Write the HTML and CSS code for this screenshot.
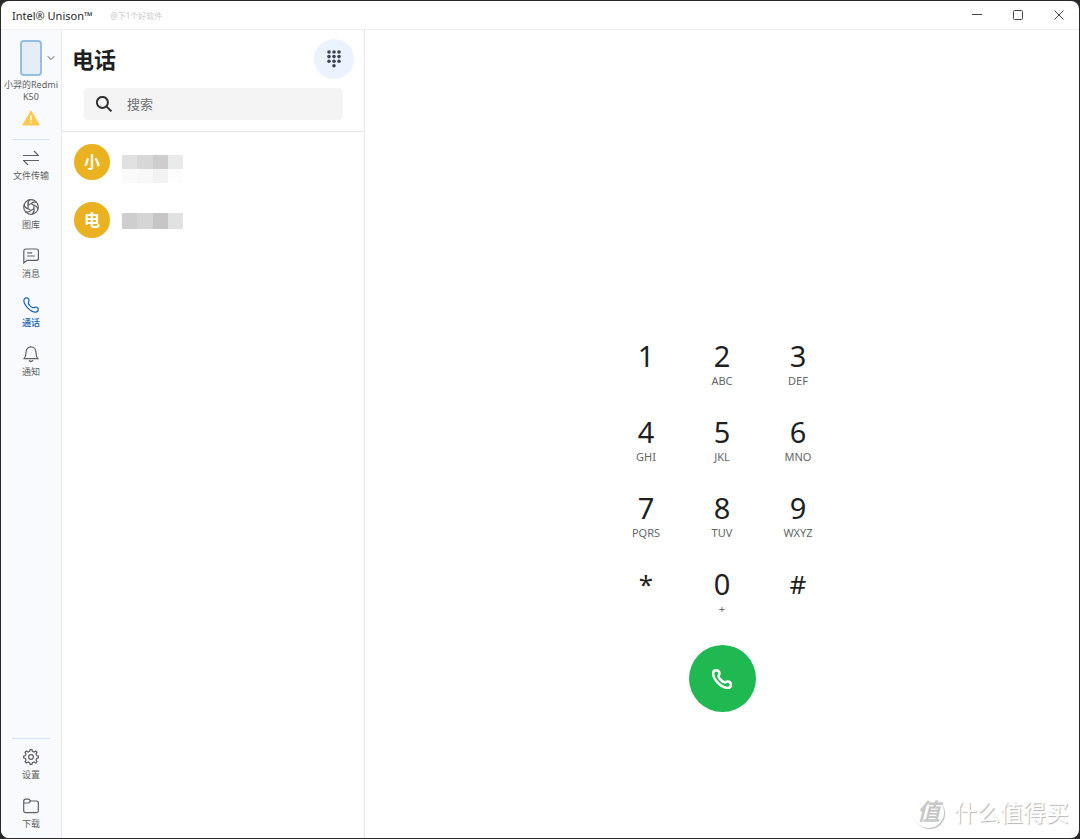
FILE: index.html
```html
<!DOCTYPE html>
<html lang="zh-CN">
<head>
    <meta charset="UTF-8">
    <meta name="viewport" content="width=device-width, initial-scale=1.0">
    <title>Intel® Unison™</title>
    <link rel="stylesheet" href="styles.css">
</head>
<body>
    <!-- handset shape, shared by the nav and the call button -->
    <svg class="defs" aria-hidden="true">
        <symbol id="phone" viewBox="0 0 16 16">
            <path d="M.9 3.6C.9 2 2 .9 3.4.9c1.5 0 2.6 1.2 2.6 2.6 0 1-.9 1.5-.7 2.5.4 1.7 2.9 4.2 4.7 4.7 1 .2 1.5-.7 2.5-.7 1.5 0 2.7 1.2 2.7 2.6 0 1.5-1.2 2.6-2.8 2.6C7.6 15.2.9 8.4.9 3.6z"/>
        </symbol>
    </svg>

    <div class="window">
        <header class="titlebar">
            <span class="app-name">Intel® Unison™</span>
            <span class="credit">@下1个好软件</span>
            <div class="window-controls">
                <button type="button" aria-label="最小化">
                    <svg viewBox="0 0 10 10"><path d="M0 4.5h10"/></svg>
                </button>
                <button type="button" aria-label="最大化">
                    <svg viewBox="0 0 10 10"><rect x=".5" y=".5" width="9" height="9" rx="1"/></svg>
                </button>
                <button type="button" aria-label="关闭">
                    <svg viewBox="0 0 10 10"><path d="M.5.5l9 9M9.5.5l-9 9"/></svg>
                </button>
            </div>
        </header>

        <div class="layout">
            <aside class="sidebar">
                <button type="button" class="device">
                    <span class="device-picture">
                        <span class="device-phone"></span>
                        <svg class="chevron" viewBox="0 0 8 6"><path d="M.8 1.2L4 4.6l3.2-3.4"/></svg>
                    </span>
                    <span class="device-name">小羿的Redmi<br>K50</span>
                </button>
                <svg class="warning" viewBox="0 0 18 16">
                    <path class="warning-shape" d="M9 1L17.2 15H.8z"/>
                    <path class="warning-mark" d="M9 5.4v4.8M9 11.6v1.6"/>
                </svg>

                <nav class="nav">
                    <a href="#files">
                        <svg viewBox="0 0 16 16"><path d="M0 5.5h15.5L11 1M16 10.5H.5L5 15"/></svg>
                        文件传输
                    </a>
                    <a href="#gallery">
                        <svg viewBox="0 0 16 16">
                            <circle cx="8" cy="8" r="7.3"/>
                            <path d="M8 4.6C10 2.6 12 2.6 13.6 3.4M10.9 6.3C13.6 7 14.6 8.6 14.8 10.4M10.9 9.7C11.6 12.4 10.6 14 9.2 15.2M8 11.4C6 13.4 4 13.4 2.4 12.6M5.1 9.7C2.4 9 1.4 7.4 1.2 5.6M5.1 6.3C4.4 3.6 5.4 2 6.8.8"/>
                            <path d="M8 4.6l2.9 1.7v3.4L8 11.4 5.1 9.7V6.3z"/>
                        </svg>
                        图库
                    </a>
                    <a href="#messages">
                        <svg viewBox="0 0 16 16">
                            <path d="M2.6 1h10.8a2 2 0 0 1 2 2v7.4a2 2 0 0 1-2 2H4L.8 15V3a2 2 0 0 1 1.8-2z"/>
                            <path d="M4.2 4.8h5M4.2 8h7.6"/>
                        </svg>
                        消息
                    </a>
                    <a href="#calls" class="active" aria-current="page">
                        <svg><use href="#phone"/></svg>
                        通话
                    </a>
                    <a href="#notifications">
                        <svg viewBox="0 0 16 16">
                            <path d="M1.2 12.6C2.6 11 3 9.6 3 6.4 3 3.2 5.2.8 8 .8s5 2.4 5 5.6c0 3.2.4 4.6 1.8 6.2z"/>
                            <path d="M5.8 14.6c1.2.9 3.2.9 4.4 0"/>
                        </svg>
                        通知
                    </a>
                </nav>

                <nav class="nav nav-bottom">
                    <a href="#settings">
                        <svg viewBox="0 0 16 16">
                            <circle cx="8" cy="8" r="2.4"/>
                            <path d="M6.6 2.4L7.1.6h1.8l.5 1.8 1.6.7 1.7-1 1.3 1.3-1 1.7.7 1.5 1.7.5v1.8l-1.7.5-.7 1.6 1 1.7-1.3 1.3-1.7-1-1.6.7-.5 1.7H7.1l-.5-1.7-1.6-.7-1.7 1L2 12.7l1-1.7-.7-1.6-1.7-.5V7.1l1.7-.5L3 5.1 2 3.4l1.3-1.3 1.7 1z"/>
                        </svg>
                        设置
                    </a>
                    <a href="#downloads">
                        <svg viewBox="0 0 16 16">
                            <path d="M.7 4.6V3a1.8 1.8 0 0 1 1.8-1.8h3.3L7.6 3h5.9a1.8 1.8 0 0 1 1.8 1.8v8a1.8 1.8 0 0 1-1.8 1.8h-11a1.8 1.8 0 0 1-1.8-1.8zM.7 5h5.1l1.8-2"/>
                        </svg>
                        下载
                    </a>
                </nav>
            </aside>

            <section class="contacts">
                <div class="contacts-head">
                    <div class="title-row">
                        <h1>电话</h1>
                        <button type="button" class="keypad-toggle" aria-label="拨号键盘">
                            <svg viewBox="0 0 14 18">
                                <circle cx="2" cy="2" r="1.8"/><circle cx="7" cy="2" r="1.8"/><circle cx="12" cy="2" r="1.8"/>
                                <circle cx="2" cy="6.6" r="1.8"/><circle cx="7" cy="6.6" r="1.8"/><circle cx="12" cy="6.6" r="1.8"/>
                                <circle cx="2" cy="11.2" r="1.8"/><circle cx="7" cy="11.2" r="1.8"/><circle cx="12" cy="11.2" r="1.8"/>
                                <circle cx="7" cy="15.8" r="1.8"/>
                            </svg>
                        </button>
                    </div>
                    <label class="search">
                        <svg viewBox="0 0 16 16"><circle cx="6.4" cy="6.4" r="5.5"/><path d="M10.4 10.4l5 5"/></svg>
                        <input type="search" placeholder="搜索" aria-label="搜索">
                    </label>
                </div>
                <ul class="contact-list">
                    <li>
                        <span class="avatar">小</span>
                        <span class="masked">
                            <span class="mask mask-name"></span>
                            <span class="mask mask-detail"></span>
                        </span>
                    </li>
                    <li>
                        <span class="avatar">电</span>
                        <span class="masked">
                            <span class="mask mask-number"></span>
                        </span>
                    </li>
                </ul>
            </section>

            <main class="dialer">
                <div class="keypad">
                    <button type="button">1</button>
                    <button type="button">2<small>ABC</small></button>
                    <button type="button">3<small>DEF</small></button>
                    <button type="button">4<small>GHI</small></button>
                    <button type="button">5<small>JKL</small></button>
                    <button type="button">6<small>MNO</small></button>
                    <button type="button">7<small>PQRS</small></button>
                    <button type="button">8<small>TUV</small></button>
                    <button type="button">9<small>WXYZ</small></button>
                    <button type="button" class="sign">*</button>
                    <button type="button">0<small>+</small></button>
                    <button type="button" class="sign">#</button>
                </div>
                <button type="button" class="call" aria-label="拨打">
                    <svg><use href="#phone"/></svg>
                </button>
            </main>
        </div>

        <div class="watermark">
            <span class="watermark-logo">值</span>
            <span>什么值得买</span>
        </div>
    </div>
</body>
</html>
```
FILE: styles.css
```css
* {
    box-sizing: border-box;
}

body {
    margin: 0;
    height: 100vh;
    padding: 1px;
    background-color: #29292b;
    font-family: "Noto Sans", "Noto Sans CJK SC", sans-serif;
    color: #1f1f1f;
}

button {
    padding: 0;
    border: none;
    background: none;
    font-family: inherit;
    color: inherit;
    cursor: pointer;
}

svg {
    display: block;
    fill: none;
    stroke: currentColor;
}

.defs {
    position: absolute;
    width: 0;
    height: 0;
}

.window {
    position: relative;
    display: flex;
    flex-direction: column;
    height: 100%;
    border-radius: 8px;
    background-color: #fff;
    overflow: hidden;
}

/* title bar */
.titlebar {
    display: flex;
    align-items: center;
    height: 29px;
    padding-left: 11px;
    border-bottom: 1px solid #efefef;
}

.app-name {
    font-size: 11px;
}

.credit {
    margin-left: 18px;
    font-size: 8px;
    color: #c9c9c9;
}

.window-controls {
    display: flex;
    height: 100%;
    margin-left: auto;
}

.window-controls button {
    display: flex;
    justify-content: center;
    align-items: center;
    width: 41px;
    color: #444;
}

.window-controls svg {
    width: 10px;
    height: 10px;
}

.layout {
    display: flex;
    flex: 1;
    min-height: 0;
}

/* sidebar */
.sidebar {
    display: flex;
    flex-direction: column;
    align-items: center;
    width: 61px;
    padding-top: 10px;
    border-right: 1px solid #e8eaed;
    background-color: #f8fafd;
    color: #606060;
}

.device {
    display: flex;
    flex-direction: column;
    align-items: center;
    gap: 3px;
}

.device-picture {
    display: grid;
    grid-template-columns: 1fr 22px 1fr;
    align-items: center;
    width: 60px;
}

.device-phone {
    grid-column: 2;
    height: 36px;
    border: 2px solid #93bfe2;
    border-radius: 4px;
    background-color: #e5eef7;
}

.chevron {
    width: 8px;
    height: 6px;
    margin-left: 5px;
}

.device-name {
    font-size: 9px;
    line-height: 12px;
    white-space: nowrap;
}

.warning {
    width: 18px;
    height: 16px;
    margin-top: 7px;
}

.warning-shape {
    fill: #ffc84a;
    stroke: #ffc84a;
    stroke-linejoin: round;
}

.warning-mark {
    stroke: #fff3d6;
    stroke-width: 2;
}

.nav {
    display: flex;
    flex-direction: column;
    gap: 17px;
    width: 38px;
    margin-top: 13px;
    padding-top: 10px;
    border-top: 1px solid #d3e5f7;
}

.nav a {
    display: flex;
    flex-direction: column;
    align-items: center;
    gap: 4px;
    font-size: 9px;
    line-height: 12px;
    color: inherit;
    text-decoration: none;
    white-space: nowrap;
}

.nav svg {
    width: 16px;
    height: 16px;
    stroke-width: 1.2;
}

.nav .active {
    color: #1562b8;
    font-weight: 500;
}

.nav-bottom {
    margin-top: auto;
    padding-bottom: 8px;
}

/* contact list */
.contacts {
    width: 303px;
    border-right: 1px solid #e6e6e6;
}

.contacts-head {
    padding: 9px 10px 11px;
    border-bottom: 1px solid #e6e6e6;
}

.title-row {
    display: flex;
    justify-content: space-between;
    align-items: center;
}

h1 {
    margin: 0;
    font-size: 22px;
    line-height: 32px;
}

.keypad-toggle {
    display: flex;
    justify-content: center;
    align-items: center;
    width: 40px;
    height: 40px;
    border-radius: 50%;
    background-color: #eaf3ff;
}

.keypad-toggle svg {
    width: 14px;
    height: 18px;
    fill: #3c4654;
    stroke: none;
}

.search {
    display: flex;
    align-items: center;
    gap: 15px;
    height: 32px;
    margin: 9px 11px 0 12px;
    padding: 0 12px;
    border-radius: 4px;
    background-color: #f4f4f4;
}

.search svg {
    width: 16px;
    height: 16px;
    stroke: #333;
    stroke-width: 2;
}

.search input {
    flex: 1;
    min-width: 0;
    padding: 0;
    border: none;
    outline: none;
    background: none;
    font-family: inherit;
    font-size: 13px;
}

.search input::placeholder {
    color: #707070;
}

.contact-list {
    display: flex;
    flex-direction: column;
    gap: 22px;
    margin: 0;
    padding: 12px;
    list-style: none;
}

.contact-list li {
    display: flex;
    gap: 12px;
    height: 36px;
}

.avatar {
    width: 36px;
    height: 36px;
    border-radius: 50%;
    background-color: #eab220;
    color: #fff;
    font-size: 16px;
    font-weight: bold;
    line-height: 36px;
    text-align: center;
}

.masked {
    padding-top: 11px;
}

/* mosaic over private names */
.mask {
    display: block;
    width: 61px;
    height: 14px;
}

.mask-name {
    background: linear-gradient(to right, #e1e1e1 25%, #d7d7d9 25% 50%, #cecccd 50% 75%, #e9eaec 75%);
}

.mask-detail {
    background: linear-gradient(to right, #fafafa 25%, #f8f8f8 25% 50%, #f2f2f3 50% 75%, #fdfdfd 75%);
}

.mask-number {
    height: 16px;
    background: linear-gradient(to right, #cfcdce 25%, #d5d5d6 25% 50%, #c7c5c6 50% 75%, #e0e1e3 75%);
}

/* dialer */
.dialer {
    display: flex;
    flex: 1;
    flex-direction: column;
    justify-content: flex-end;
    align-items: center;
    gap: 10px;
    padding-bottom: 126px;
}

.keypad {
    display: grid;
    grid-template-columns: repeat(3, 76px);
    grid-auto-rows: 76px;
}

.keypad button {
    display: flex;
    flex-direction: column;
    align-items: center;
    padding-top: 7px;
    font-size: 29px;
    line-height: 36px;
}

.keypad .sign {
    font-size: 26px;
}

.keypad small {
    font-size: 11px;
    line-height: 14px;
    color: #666;
}

.call {
    display: flex;
    justify-content: center;
    align-items: center;
    width: 67px;
    height: 67px;
    border-radius: 50%;
    background-color: #20b951;
    color: #fff;
}

.call svg {
    width: 20px;
    height: 20px;
    stroke-width: 2;
}

.watermark {
    position: absolute;
    right: 10px;
    bottom: 10px;
    display: flex;
    align-items: center;
    gap: 10px;
    font-size: 23px;
    line-height: 32px;
    color: #fff;
    text-shadow: 1px 1px 1px #b4b4b4;
    pointer-events: none;
}

.watermark-logo {
    width: 31px;
    height: 31px;
    border-radius: 50%;
    box-shadow: 1px 1px 1px #bbb;
    color: #c8c8c8;
    font-weight: bold;
    font-style: italic;
    line-height: 29px;
    text-align: center;
    text-shadow: none;
}
```
